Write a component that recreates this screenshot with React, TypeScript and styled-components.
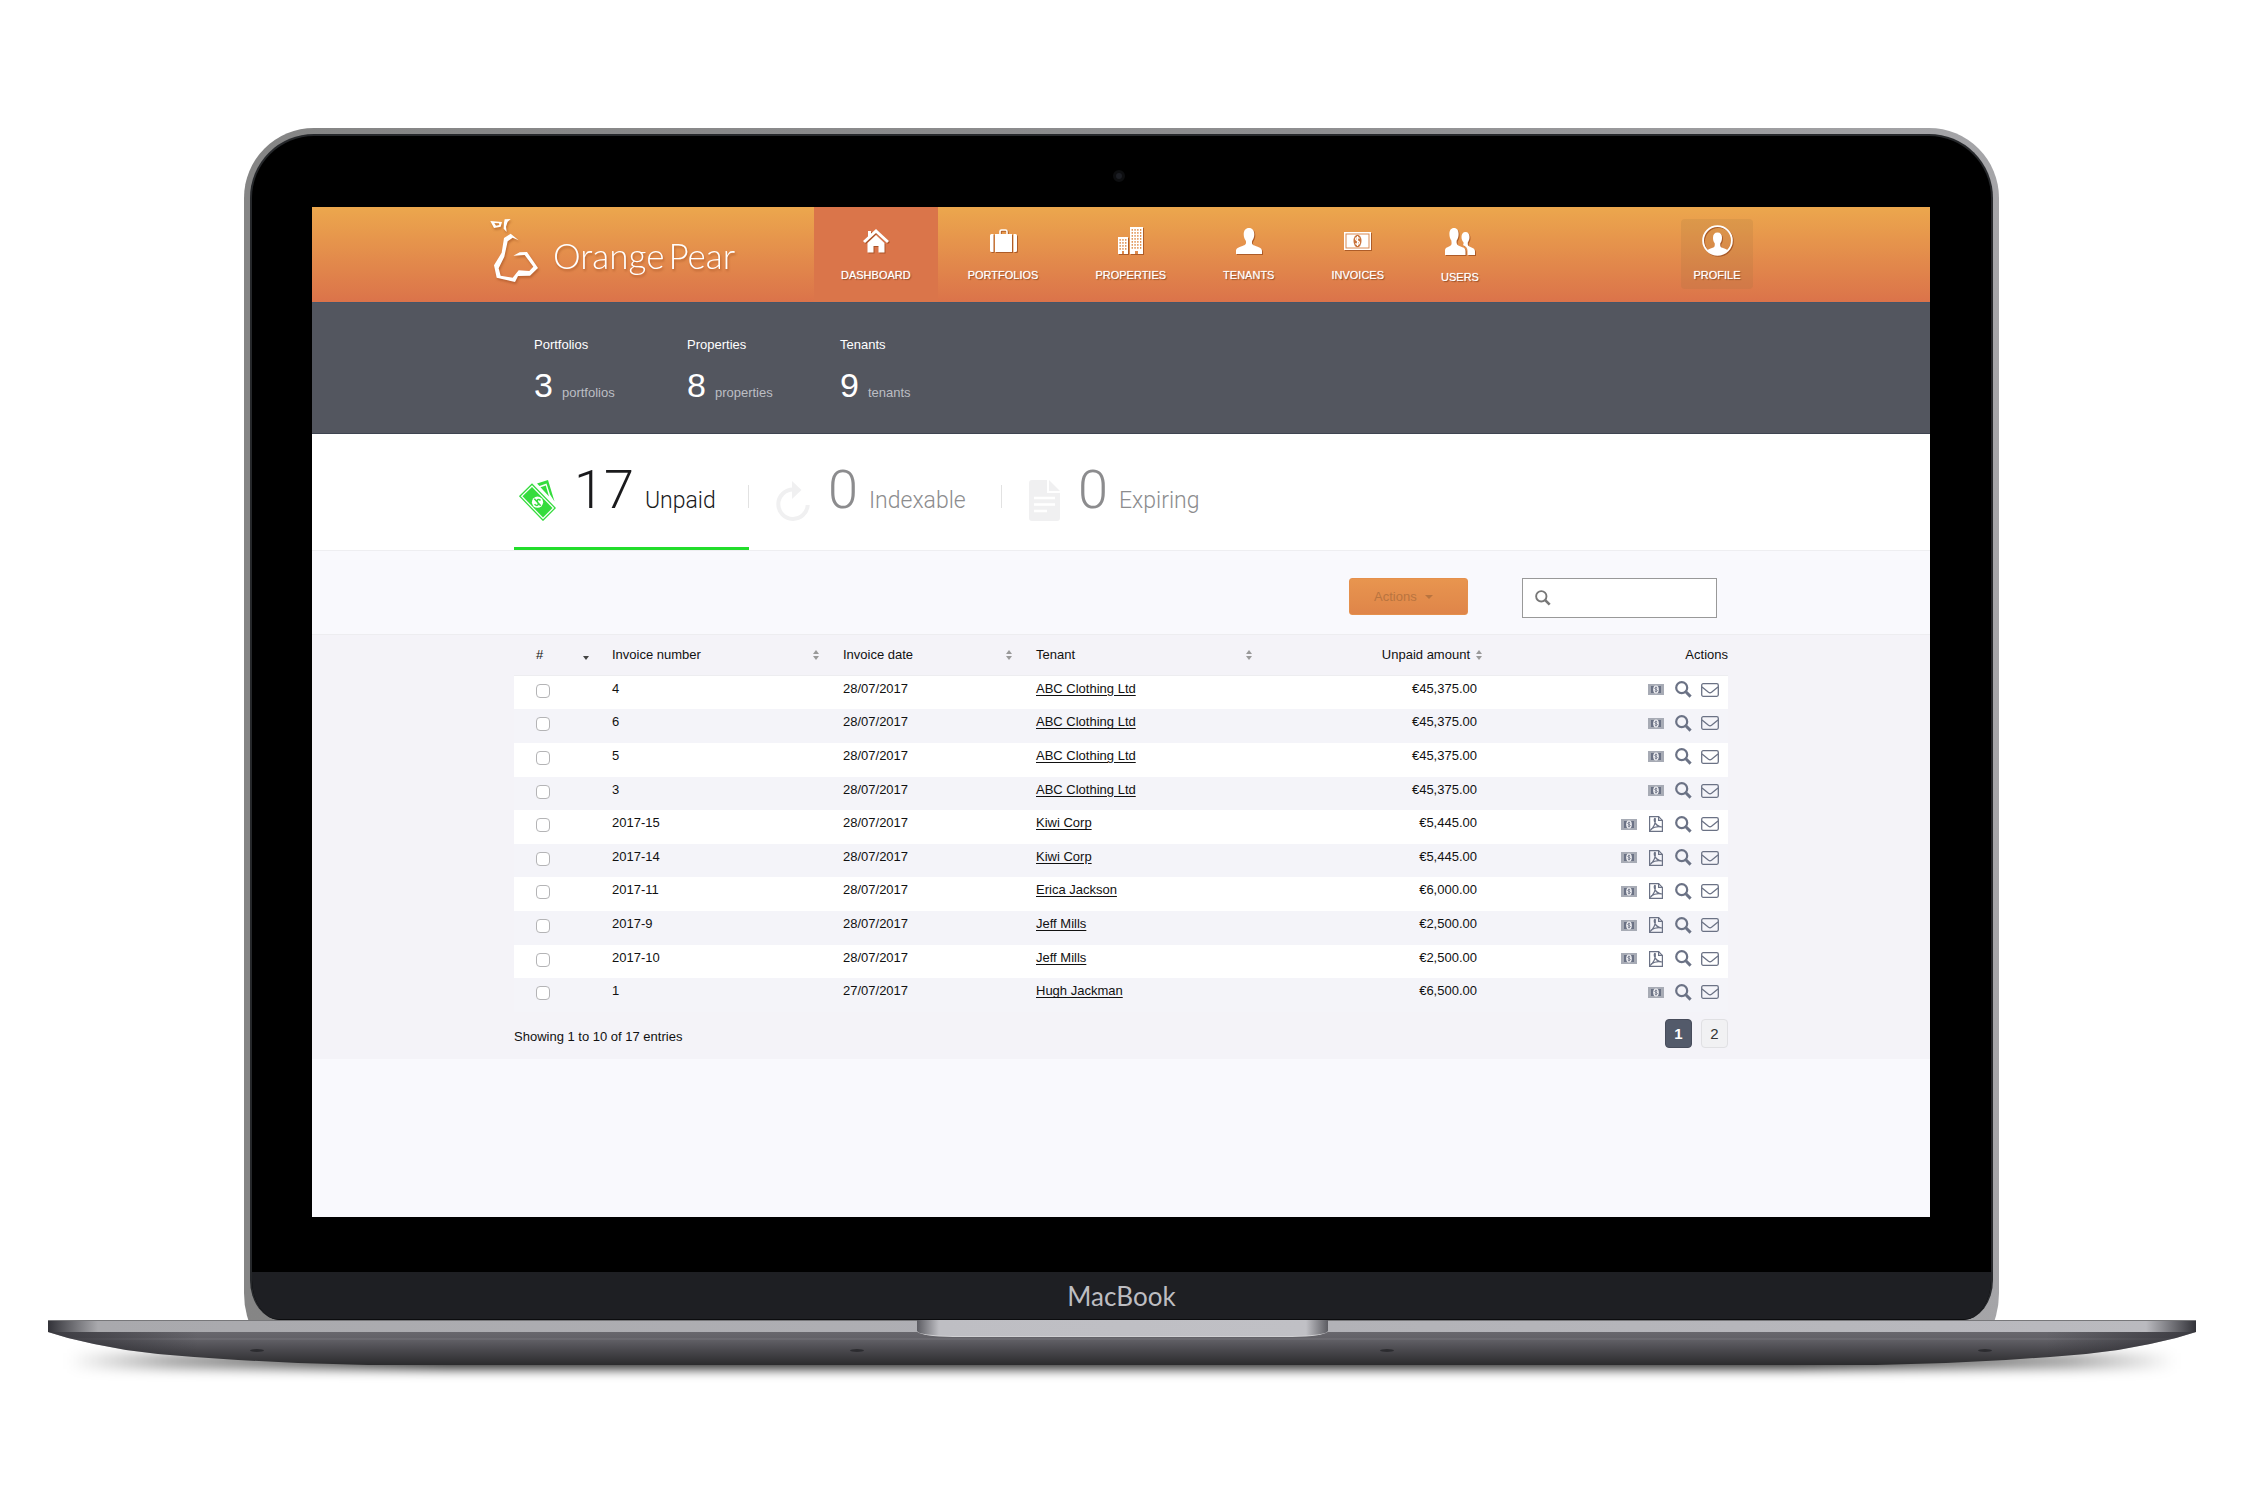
import React from 'react';
import styled, { createGlobalStyle, css } from 'styled-components';

const Global = createGlobalStyle`
  * { box-sizing: border-box; }
  body { margin: 0; background: #fff; }
  button, input { font: inherit; }
`;

const sans = '"Liberation Sans", Arial, sans-serif';

/* ---------- Laptop ---------- */

const Stage = styled.div`
  padding: 128px 54px 110px 48px;
  min-width: 1840px;
  font-family: ${sans};
  font-size: 13px;
  line-height: 16px;
  color: #111;
`;

const Lid = styled.div`
  margin: 0 197px 0 196px;
  padding: 6px 6px 33px;
  background: linear-gradient(90deg, #858585, #8e8e90 60%, #a5a5a8);
  border-radius: 70px 70px 40px 40px / 70px 70px 60px 60px;
`;

const Bezel = styled.div`
  border: 2px solid #26282b;
  border-bottom: 0;
  border-radius: 64px 64px 30px 30px / 64px 64px 40px 40px;
  background: #000;
  overflow: hidden;
`;

const CameraRow = styled.div`
  display: flex;
  justify-content: center;
  height: 71px;
  padding: 34px 6px 0 0;
`;

const Camera = styled.span`
  width: 12px;
  height: 12px;
  border-radius: 50%;
  background: #1c1e24;
  border: 3px solid #0d0e10;
`;

const Screen = styled.main`
  margin: 0 61px 55px 60px;
  min-height: 1010px;
  background: #f9f9fd;
`;

const Chin = styled.div`
  display: flex;
  justify-content: center;
  align-items: center;
  height: 48px;
  background: #1e1f23;
  border-bottom: 1px solid #0b0c0e;
  border-radius: 0 0 26px 26px;
  color: #bdbdc1;
  font: 400 26px/32px Lato, sans-serif;
`;

const Base = styled.div`
  position: relative;
  margin-top: -33px;
  &::before {
    content: '';
    position: absolute;
    left: 20px;
    right: 20px;
    top: 33px;
    height: 16px;
    filter: blur(6px);
    background: linear-gradient(90deg, transparent, rgba(0,0,0,.35) 5%, rgba(0,0,0,.85) 18%, rgba(0,0,0,.85) 82%, rgba(0,0,0,.35) 95%, transparent);
  }
`;

const Deck = styled.div`
  position: relative;
  display: flex;
  justify-content: center;
  height: 12px;
  border-top: 1px solid #77777a;
  background: linear-gradient(90deg, #323238, #a9a9ad 50px, #b0b0b5 50%, #bababf calc(100% - 50px), #323238);
`;

const Notch = styled.div`
  position: relative;
  z-index: 1;
  width: 411px;
  height: 17px;
  margin-top: -1px;
  border-bottom: 1px solid #d0d0d3;
  border-radius: 0 0 36px 36px / 0 0 6px 6px;
  background: linear-gradient(90deg, #5c5c62, #bebec3 22px, #c0c0c5 calc(100% - 22px), #5c5c62);
`;

const Hull = styled.div`
  position: relative;
  display: grid;
  grid-template-columns: 600fr 530fr 598fr 14px;
  height: 33px;
  padding: 17px 204px 0 202px;
  background:
    linear-gradient(90deg, rgba(30,30,36,.6), transparent 150px, transparent calc(100% - 150px), rgba(30,30,36,.6)),
    linear-gradient(#68676d 0, #626167 6px, #737278 7px, #605f65 8px, #4a494e 18px, #2b2b2d 33px);
  clip-path: polygon(
    0 0, 100% 0, calc(100% - 20px) 6px, calc(100% - 46px) 12px, calc(100% - 78px) 18px,
    calc(100% - 110px) 22px, calc(100% - 146px) 25px, calc(100% - 190px) 28px, calc(100% - 250px) 31px,
    calc(100% - 320px) 33px, 320px 33px, 250px 31px, 190px 28px, 146px 25px, 110px 22px, 78px 18px, 46px 12px, 20px 6px
  );
`;

const Foot = styled.span`
  width: 14px;
  height: 3px;
  border-radius: 50%;
  background: #2c2c30;
`;

/* ---------- Header ---------- */

const Header = styled.header`
  height: 95px;
  background: linear-gradient(#eca74d, #db734a);
`;

const HeaderInner = styled.div`
  display: flex;
  width: 100%;
  max-width: 1264px;
  height: 100%;
  margin: 0 auto;
`;

const Brand = styled.a`
  display: flex;
  align-items: flex-start;
  width: 325px;
  padding-top: 12px;
  color: #fff;
  text-decoration: none;
  filter: drop-shadow(1px 2px 1px rgba(150, 70, 25, 0.5));
`;

const BrandName = styled.span`
  display: flex;
  gap: 4px;
  padding: 16px 0 0 14px;
  font: 300 35px/40px Lato, sans-serif;
`;

const Nav = styled.nav`
  display: flex;
  gap: 3px;
`;

const caption = css`
  color: #fff;
  font-size: 11px;
  line-height: 14px;
  text-decoration: none;
  text-transform: uppercase;
  text-shadow: 1px 1px 1px rgba(130, 60, 20, 0.8), 0 0 1px #fff;
  svg { filter: drop-shadow(1px 1px 0 rgba(150, 70, 25, 0.7)); }
`;

const NavLink = styled.a<{ $active?: boolean }>`
  ${caption}
  display: flex;
  flex-direction: column;
  align-items: center;
  gap: 14px;
  padding: 20px 27px 0;
  background: ${(p) => (p.$active ? '#da754a' : 'transparent')};
`;

const NavIcon = styled.span<{ $tall?: boolean }>`
  display: flex;
  align-items: center;
  height: ${(p) => (p.$tall ? 29 : 27)}px;
`;

const Profile = styled.button`
  ${caption}
  display: flex;
  flex-direction: column;
  align-items: center;
  gap: 12px;
  width: 72px;
  height: 70px;
  margin: 12px 0 0 auto;
  padding: 6px 0 0;
  border: 0;
  border-radius: 4px;
  background: rgba(150, 110, 60, 0.16);
`;

/* ---------- Summary ---------- */

const Summary = styled.section`
  padding: 34px 0 0;
  height: 132px;
  border-top: 1px solid #45566a;
  border-bottom: 1px solid #3e4450;
  background: #53565f;
`;

const Container = styled.div`
  width: 100%;
  max-width: 1214px;
  margin: 0 auto;
`;

const StatList = styled(Container)`
  display: flex;
  padding-left: 20px;
`;

const Stat = styled.div`
  width: 153px;
  color: #fff;
`;

const StatValue = styled.div`
  display: flex;
  align-items: baseline;
  gap: 9px;
  margin-top: 12px;
  color: #bcbec4;
  strong {
    color: #fff;
    font-weight: 400;
    font-size: 34px;
    line-height: 40px;
  }
`;

/* ---------- Tabs ---------- */

const TabBar = styled.section`
  background: #fff;
  border-bottom: 1px solid #eeeef1;
`;

const Tabs = styled(Container)`
  display: flex;
`;

const Tab = styled.button<{ $active?: boolean }>`
  position: relative;
  display: flex;
  align-items: flex-start;
  width: ${(p) => (p.$active ? 235 : 253)}px;
  height: 116px;
  padding: 0 0 0 ${(p) => (p.$active ? 5 : 27)}px;
  border: 0;
  border-bottom: 3px solid ${(p) => (p.$active ? '#22dd2b' : 'transparent')};
  background: none;
  color: ${(p) => (p.$active ? '#1a1a1c' : '#8c8c8e')};
  font-family: Roboto, ${sans};
  font-weight: 300;
  text-align: left;
  svg { flex: none; margin-top: 46px; }
  &:not(:last-child)::after {
    content: '';
    position: absolute;
    right: 0;
    top: 51px;
    width: 1px;
    height: 23px;
    background: #e2e2e2;
  }
`;

const TabLabel = styled.span`
  display: flex;
  align-items: baseline;
  gap: 11px;
  padding: 26px 0 0 18px;
  font-size: 23px;
  line-height: 60px;
  b { font-weight: 300; font-size: 54px; }
`;

/* ---------- Toolbar ---------- */

const Toolbar = styled(Container)`
  display: flex;
  justify-content: flex-end;
  gap: 54px;
  height: 83px;
  padding: 27px 11px 0 0;
`;

const ActionsButton = styled.button`
  display: flex;
  align-items: center;
  gap: 8px;
  width: 119px;
  height: 37px;
  padding: 0 0 0 24px;
  border: 1px solid #e5904c;
  border-radius: 3px;
  background: linear-gradient(#e8954f, #df8549);
  color: #b9743f;
`;

const SearchBox = styled.label`
  display: flex;
  align-items: center;
  gap: 8px;
  width: 195px;
  height: 40px;
  padding: 0 12px;
  border: 1px solid #999;
  background: #fff;
  input { flex: 1; min-width: 0; border: 0; outline: 0; background: none; }
`;

/* ---------- Table ---------- */

const Results = styled.section`
  height: 425px;
  border-top: 1px solid #ededf0;
  background: #f4f3f8;
`;

const Table = styled.table`
  width: 100%;
  border-collapse: collapse;
  table-layout: fixed;
  thead th { height: 40px; border-bottom: 1px solid #ededf0; }
  tbody { height: 337px; }
  tbody tr:nth-child(odd) { background: #fff; }
  tbody tr:nth-child(even) { background: #f4f4f9; }
`;

const Col = styled.col<{ $w: number }>`
  width: ${(p) => p.$w}px;
`;

const Th = styled.th<{ $pad?: string }>`
  padding: ${(p) => p.$pad ?? '0 24px 0 0'};
  font-weight: 400;
  text-align: left;
`;

const HeadLabel = styled.span<{ $end?: boolean }>`
  display: flex;
  align-items: center;
  justify-content: ${(p) => (p.$end ? 'flex-end' : 'space-between')};
  gap: 6px;
`;

const Td = styled.td<{ $end?: boolean }>`
  padding: ${(p) => (p.$end ? '5px 29px 0 0' : '5px 0 0')};
  vertical-align: top;
  text-align: ${(p) => (p.$end ? 'right' : 'left')};
`;

const CheckCell = styled.td`
  padding: 8px 0 0 22px;
  vertical-align: top;
`;

const Checkbox = styled.input`
  appearance: none;
  display: block;
  width: 14px;
  height: 14px;
  margin: 0;
  border: 1px solid #b4b4b6;
  border-radius: 4px;
  background: #fff;
`;

const TenantLink = styled.a`
  color: #111;
  text-underline-offset: 2px;
`;

const ActionCell = styled.td`
  padding: 5px 9px 0 0;
  vertical-align: top;
`;

const RowActions = styled.div`
  display: flex;
  justify-content: flex-end;
  gap: 9px;
`;

const IconButton = styled.button`
  display: flex;
  align-items: center;
  justify-content: center;
  width: 18px;
  height: 18px;
  padding: 0;
  border: 0;
  background: none;
  color: #6b7285;
`;

const Footer = styled.footer`
  display: flex;
  justify-content: space-between;
  padding-top: 7px;
`;

const Showing = styled.span`
  padding-top: 10px;
`;

const Pager = styled.nav`
  display: flex;
  gap: 9px;
`;

const PageButton = styled.button<{ $current?: boolean }>`
  width: 27px;
  height: 29px;
  padding: 0;
  border: 1px solid ${(p) => (p.$current ? '#474c5b' : '#e0e0e3')};
  border-radius: 4px;
  background: ${(p) => (p.$current ? '#535a6a' : '#f1f1f3')};
  color: ${(p) => (p.$current ? '#fff' : '#333')};
  font-size: 15px;
  font-weight: ${(p) => (p.$current ? 700 : 400)};
`;

/* ---------- Drawings ---------- */

const PearMark = () => (
  <svg width="50" height="65" viewBox="57 57 150 195" fill="#fff" aria-hidden="true">
    <path fillRule="evenodd" d="M61 63 96 66 92 80 72 84Z M73 69 78 77 88 75 87 70Z" />
    <path d="M104 58 122 57 113 65 108 80 110 96 101 86 102 68Z" />
    <path d="M146 121 122 101 102 114 95 158 72 196 80 233 135 246 144 228 180 227 204 204 171 156 149 157 130 167 164 165 190 200 178 213 146 211 128 233 92 227 86 205 103 170 113 124 128 113Z" />
  </svg>
);

const HomeIcon = () => (
  <svg width="26" height="24" viewBox="0 0 26 24" fill="#fff">
    <path d="M5 2h3v5L5 10z" />
    <path d="M13 0 0 12l2 2L13 4l11 10 2-2z" />
    <path d="M13 6 4.500 14v9.500h6V17h5v6.500h6V14z" />
  </svg>
);

const SuitcaseIcon = () => (
  <svg width="27" height="24" viewBox="0 0 27 24" fill="#fff">
    <path d="M10 5V2.500Q10 1 11.500 1h4Q17 1 17 2.500V5" fill="none" stroke="#fff" strokeWidth="1.600" />
    <path d="M1.500 5H3.500v18H1.500Q0 23 0 21.500v-15Q0 5 1.500 5zM5 5h17v18h-17zM23.500 5h2Q27 5 27 6.500v15q0 1.500-1.500 1.500H23.500z" />
  </svg>
);

const windows = (x0: number, y0: number, cols: number, rows: number, dx: number) =>
  Array.from({ length: cols * rows }, (_, i) => (
    <rect key={`${x0}-${i}`} x={x0 + (i % cols) * dx} y={y0 + Math.floor(i / cols) * 3} width="1.300" height="1.800" fill="#df8e4c" />
  ));

const BuildingsIcon = () => (
  <svg width="25" height="27" viewBox="0 0 25 27" fill="#fff">
    <path d="M12 0h13v27H12zM0 10h10v17H0z" />
    {windows(13.6, 2, 4, 7, 2.8)}
    {windows(1.5, 12, 3, 4, 2.8)}
    <path d="M17 24h3v3h-3zM4 24h2v3H4z" fill="#df8a4c" />
  </svg>
);

const bust =
  'M13 0c3.300 0 5.300 2.400 5.300 6.300 0 3-.9 5-2.200 6.600-.5 3 .4 4 3.500 5C23.500 19.300 26 20 26 23v3H0v-3c0-3 2.500-3.700 6.400-5.100 3.100-1 4-2 3.500-5C8.600 11.300 7.700 9.300 7.700 6.300 7.700 2.400 9.700 0 13 0z';

const PersonIcon = () => (
  <svg width="26" height="26" viewBox="0 0 26 26" fill="#fff"><path d={bust} /></svg>
);

const UsersIcon = () => (
  <svg width="30" height="27" viewBox="0 0 30 27" fill="#fff">
    <path d="M9 0c3 0 4.600 2.300 4.600 6 0 3-.8 5-1.900 6.500-.4 3 .2 4.500 3.300 5.700C18.500 19.500 20.500 20 20.500 23v4H0v-4c0-3 1.500-3.500 4.500-4.800 2.600-1.200 2.200-2.700 1.800-5.700C5.200 11 4.400 9 4.400 6 4.400 2.300 6 0 9 0z" />
    <path d="M20.500 4c2.600 0 4 2 4 5 0 2.500-.7 4-1.700 5.400-.3 2.600.3 3.600 2.700 4.600 3.300 1.300 4.500 2 4.500 4.500V27h-7.500v-4c0-3-1.500-4.500-4.500-6 .8-1 .6-1.700.4-2.700-1.100-1.400-1.900-2.800-1.900-5.300 0-3 1.400-5 4-5z" />
  </svg>
);

const NoteIcon = () => (
  <svg width="27" height="18" viewBox="0 0 27 18">
    <rect width="27" height="18" fill="#fff" />
    <rect x="2" y="2" width="23" height="14" fill="none" stroke="#d98a52" strokeWidth="1" />
    <ellipse cx="13.500" cy="9" rx="4" ry="6.300" fill="#c9733c" />
    <path d="M15.500 6.500c-1-1.300-4-1.200-4 .6 0 2 4 1.600 4 3.700 0 1.800-3 2-4 .6M13.500 4v10" fill="none" stroke="#fff" strokeWidth="1.200" />
  </svg>
);

const ProfileIcon = () => (
  <svg width="31" height="31" viewBox="0 0 31 31">
    <circle cx="15.500" cy="15.500" r="14.400" fill="none" stroke="#fff" strokeWidth="1.800" />
    <path d="M15.500 7.500c3 0 4.500 2 4.500 5.300 0 2.500-.7 4.200-1.700 5.500-.3 3 .2 3.800 2.700 4.800 2 .7 3.500 1 4.500 2.200-5 6-15 6-20 0 1-1.200 2.500-1.500 4.500-2.200 2.500-1 3-1.800 2.700-4.800-1-1.300-1.700-3-1.700-5.500 0-3.300 1.500-5.300 4.500-5.300z" fill="#fff" />
  </svg>
);

const CashIcon = () => (
  <svg width="37" height="41" viewBox="0 0 37 41">
    <path d="M18 3.500 29 0l6.500 21.500L31 14.500 27.500 3.500 20.500 6z" fill="#35dc3d" />
    <path d="M21.500 7.200 26.800 5.400 30 16.500z" fill="#35dc3d" />
    <path d="M.8 16.200 13 4.200 36.200 28 24 40.200z" fill="#fff" stroke="#35dc3d" strokeWidth="1.300" />
    <path d="M3.500 16.300 13 7 33.500 28 24 37.500z" fill="#35dc3d" />
    <circle cx="18.500" cy="22.200" r="5.600" fill="#fff" />
    <path d="M21.500 20.500c-1.600-2-3.700-.8-3.200.9.500 1.700 1.500 2 .8 3.300-.7 1.200-2.700.8-3.400-.7M15.300 18.700l6.400 7" fill="none" stroke="#35dc3d" strokeWidth="1.500" />
  </svg>
);

const RefreshIcon = () => (
  <svg width="34" height="41" viewBox="0 0 34 41">
    <path d="M17 9.500A14.700 14.700 0 1 0 31.700 25" fill="none" stroke="#f0f0f1" strokeWidth="4" />
    <path d="M16 1l9.500 9L16 19z" fill="#f0f0f1" />
  </svg>
);

const DocumentIcon = () => (
  <svg width="31" height="41" viewBox="0 0 31 41">
    <path d="M3 0h15v13h13v25q0 3-3 3H3q-3 0-3-3V3Q0 0 3 0zM20 0l11 11H20z" fill="#f0f0f1" />
    <path d="M5 18h21M5 24.500h21M5 31h13" stroke="#fff" strokeWidth="2.600" />
  </svg>
);

const Caret = () => (
  <svg width="8" height="4" viewBox="0 0 8 4" fill="currentColor"><path d="M0 0h8L4 4z" /></svg>
);

const SortIcon = ({ down }: { down?: boolean }) => (
  <svg width="6" height="10" viewBox="0 0 6 10" fill={down ? '#444' : '#999'}>
    {!down && <path d="M3 0l3 4H0z" />}
    <path d="M0 6h6L3 10z" />
  </svg>
);

const SearchIcon = ({ size = 17, color = 'currentColor', weight = 2.2 }) => (
  <svg width={size} height={size} viewBox="0 0 17 17" fill="none" stroke={color}>
    <circle cx="6.700" cy="6.700" r="5.500" strokeWidth={weight} />
    <path d="M10.800 10.800 15.600 15.600" strokeWidth={weight + 0.8} />
  </svg>
);

const MiniNote = () => (
  <svg width="16" height="11" viewBox="0 0 16 11">
    <rect width="16" height="11" fill="#a7abb5" />
    <path d="M3 2h10v7H3z" fill="#6b7285" />
    <ellipse cx="8" cy="5.500" rx="2.800" ry="3.900" fill="#f3f3f6" />
    <path d="M9.300 4c-.8-.8-2.500-.6-2.500.4 0 1.200 2.500.9 2.500 2.200 0 1-1.800 1.200-2.600.3M8 2.500v6" fill="none" stroke="#6b7285" strokeWidth=".9" />
  </svg>
);

const PdfIcon = () => (
  <svg width="14" height="16" viewBox="0 0 14 16" fill="none" stroke="currentColor" strokeWidth="1.200">
    <path d="M.6.600h9L13.400 4.400v11H.6z" />
    <path d="M9.600.600v3.800h3.800" />
    <path d="M1 14.500C4.500 12 7 7 6.300 2.800 5.800 1.500 4.900 3 5.400 5c.9 3.200 3.600 5.500 7.600 6-3.500-.9-7.500-.3-11 2" />
  </svg>
);

const MailIcon = () => (
  <svg width="18" height="14" viewBox="0 0 18 14" fill="none" stroke="currentColor" strokeWidth="1.300">
    <rect x=".700" y=".700" width="16.600" height="12.600" rx="1.500" />
    <path d="M1 4 7.500 9.300Q9 10.300 10.500 9.300L17 4" />
  </svg>
);

/* ---------- Data ---------- */

const navItems = [
  { label: 'Dashboard', icon: <HomeIcon />, active: true },
  { label: 'Portfolios', icon: <SuitcaseIcon /> },
  { label: 'Properties', icon: <BuildingsIcon /> },
  { label: 'Tenants', icon: <PersonIcon /> },
  { label: 'Invoices', icon: <NoteIcon /> },
  { label: 'Users', icon: <UsersIcon />, tall: true },
];

const stats = [
  { title: 'Portfolios', value: 3, unit: 'portfolios' },
  { title: 'Properties', value: 8, unit: 'properties' },
  { title: 'Tenants', value: 9, unit: 'tenants' },
];

const tabs = [
  { label: 'Unpaid', count: 17, icon: <CashIcon />, active: true },
  { label: 'Indexable', count: 0, icon: <RefreshIcon /> },
  { label: 'Expiring', count: 0, icon: <DocumentIcon /> },
];

const invoices = [
  { no: '4', date: '28/07/2017', tenant: 'ABC Clothing Ltd', amount: '€45,375.00' },
  { no: '6', date: '28/07/2017', tenant: 'ABC Clothing Ltd', amount: '€45,375.00' },
  { no: '5', date: '28/07/2017', tenant: 'ABC Clothing Ltd', amount: '€45,375.00' },
  { no: '3', date: '28/07/2017', tenant: 'ABC Clothing Ltd', amount: '€45,375.00' },
  { no: '2017-15', date: '28/07/2017', tenant: 'Kiwi Corp', amount: '€5,445.00', pdf: true },
  { no: '2017-14', date: '28/07/2017', tenant: 'Kiwi Corp', amount: '€5,445.00', pdf: true },
  { no: '2017-11', date: '28/07/2017', tenant: 'Erica Jackson', amount: '€6,000.00', pdf: true },
  { no: '2017-9', date: '28/07/2017', tenant: 'Jeff Mills', amount: '€2,500.00', pdf: true },
  { no: '2017-10', date: '28/07/2017', tenant: 'Jeff Mills', amount: '€2,500.00', pdf: true },
  { no: '1', date: '27/07/2017', tenant: 'Hugh Jackman', amount: '€6,500.00' },
];

function InvoiceTable() {
  return (
    <Table>
      <colgroup>
        {[98, 231, 193, 240, 230, 222].map((w, i) => <Col key={i} $w={w} />)}
      </colgroup>
      <thead>
        <tr>
          <Th $pad="0 23px 0 22px"><HeadLabel>#<SortIcon down /></HeadLabel></Th>
          <Th><HeadLabel>Invoice number<SortIcon /></HeadLabel></Th>
          <Th><HeadLabel>Invoice date<SortIcon /></HeadLabel></Th>
          <Th><HeadLabel>Tenant<SortIcon /></HeadLabel></Th>
          <Th><HeadLabel $end>Unpaid amount<SortIcon /></HeadLabel></Th>
          <Th $pad="0"><HeadLabel $end>Actions</HeadLabel></Th>
        </tr>
      </thead>
      <tbody>
        {invoices.map((row) => (
          <tr key={row.no}>
            <CheckCell><Checkbox type="checkbox" aria-label={`Select invoice ${row.no}`} /></CheckCell>
            <Td>{row.no}</Td>
            <Td>{row.date}</Td>
            <Td><TenantLink href="#tenant">{row.tenant}</TenantLink></Td>
            <Td $end>{row.amount}</Td>
            <ActionCell>
              <RowActions>
                <IconButton aria-label="Register payment"><MiniNote /></IconButton>
                {row.pdf && <IconButton aria-label="Open PDF"><PdfIcon /></IconButton>}
                <IconButton aria-label="View"><SearchIcon /></IconButton>
                <IconButton aria-label="Send by mail"><MailIcon /></IconButton>
              </RowActions>
            </ActionCell>
          </tr>
        ))}
      </tbody>
    </Table>
  );
}

export default function App() {
  return (
    <>
      <Global />
      <Stage>
        <Lid>
          <Bezel>
            <CameraRow><Camera /></CameraRow>
            <Screen>
              <Header>
                <HeaderInner>
                  <Brand href="#home">
                    <PearMark />
                    <BrandName><span>Orange</span><span>Pear</span></BrandName>
                  </Brand>
                  <Nav>
                    {navItems.map((item) => (
                      <NavLink key={item.label} href={`#${item.label.toLowerCase()}`} $active={item.active}>
                        <NavIcon $tall={item.tall}>{item.icon}</NavIcon>
                        {item.label}
                      </NavLink>
                    ))}
                  </Nav>
                  <Profile><ProfileIcon />Profile</Profile>
                </HeaderInner>
              </Header>
              <Summary>
                <StatList>
                  {stats.map((s) => (
                    <Stat key={s.title}>
                      {s.title}
                      <StatValue><strong>{s.value}</strong>{s.unit}</StatValue>
                    </Stat>
                  ))}
                </StatList>
              </Summary>
              <TabBar>
                <Tabs>
                  {tabs.map((t) => (
                    <Tab key={t.label} $active={t.active}>
                      {t.icon}
                      <TabLabel><b>{t.count}</b>{t.label}</TabLabel>
                    </Tab>
                  ))}
                </Tabs>
              </TabBar>
              <Toolbar>
                <ActionsButton>Actions<Caret /></ActionsButton>
                <SearchBox>
                  <SearchIcon size={16} color="#777" weight={2} />
                  <input type="search" aria-label="Search invoices" />
                </SearchBox>
              </Toolbar>
              <Results>
                <Container>
                  <InvoiceTable />
                  <Footer>
                    <Showing>Showing 1 to 10 of 17 entries</Showing>
                    <Pager>
                      <PageButton $current>1</PageButton>
                      <PageButton>2</PageButton>
                    </Pager>
                  </Footer>
                </Container>
              </Results>
            </Screen>
            <Chin>MacBook</Chin>
          </Bezel>
        </Lid>
        <Base>
          <Deck><Notch /></Deck>
          <Hull><Foot /><Foot /><Foot /><Foot /></Hull>
        </Base>
      </Stage>
    </>
  );
}
